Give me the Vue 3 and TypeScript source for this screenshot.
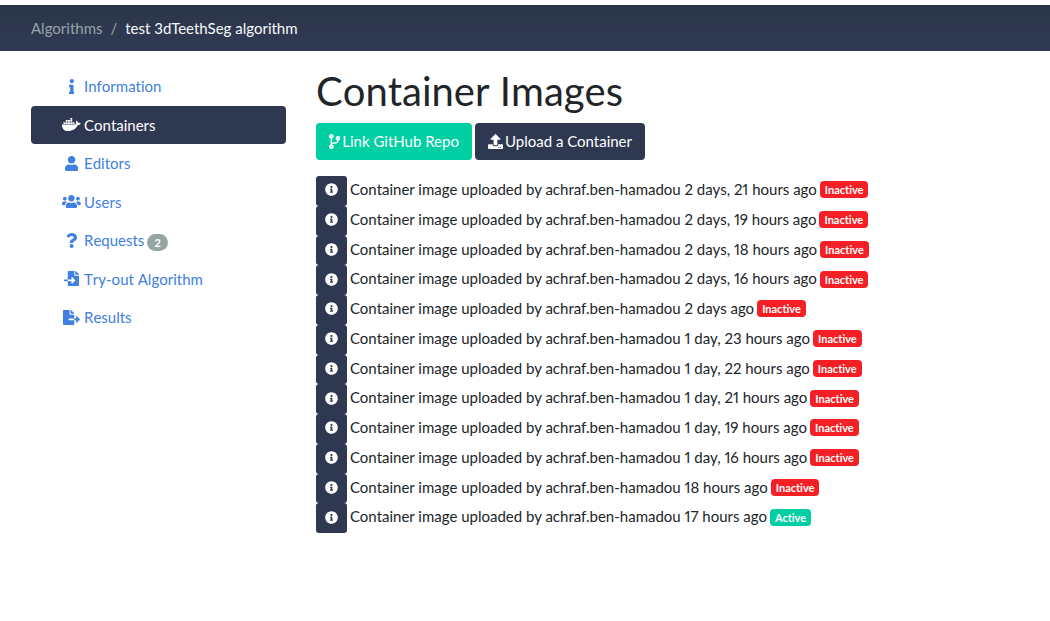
<script setup lang="ts">
interface Glyph {
  width: number
  path: string
}

interface NavItem {
  label: string
  icon: Glyph
  active?: boolean
  count?: number
}

interface ContainerImage {
  age: string
  active: boolean
}

const icons: Record<string, Glyph> = {
  info: {
    width: 192,
    path: 'M20 424.229h20V279.771H20c-11.046 0-20-8.954-20-20V212c0-11.046 8.954-20 20-20h112c11.046 0 20 8.954 20 20v212.229h20c11.046 0 20 8.954 20 20V492c0 11.046-8.954 20-20 20H20c-11.046 0-20-8.954-20-20v-47.771c0-11.046 8.954-20 20-20zM96 0C56.235 0 24 32.235 24 72s32.235 72 72 72 72-32.235 72-72S135.764 0 96 0z',
  },
  docker: {
    width: 640,
    path: 'M349.9 236.3h-66.1v-59.4h66.1v59.4zm0-204.3h-66.1v60.7h66.1V32zm78.2 144.8H362v59.4h66.1v-59.4zm-156.3-72.1h-66.1v60.1h66.1v-60.1zm78.1 0h-66.1v60.1h66.1v-60.1zm276.8 100c-14.4-9.7-47.6-13.2-73.1-8.4-3.3-24-16.7-44.9-41.1-63.7l-14-9.3-9.3 14c-18.4 27.8-23.4 73.6-3.7 103.8-8.7 4.7-25.8 11.1-48.4 10.7H2.4c-8.7 50.8 5.8 116.8 44 162.1 37.1 43.9 92.7 66.2 165.4 66.2 157.4 0 273.9-72.5 328.4-204.2 21.4.4 67.6.1 91.3-45.2 1.5-2.5 6.6-13.2 8.5-17.1l-13.3-8.9zm-511.1-27.9h-66v59.4h66.1v-59.4zm78.1 0h-66.1v59.4h66.1v-59.4zm78.1 0h-66.1v59.4h66.1v-59.4zm-78.1-72.1h-66.1v60.1h66.1v-60.1z',
  },
  user: {
    width: 448,
    path: 'M224 256c70.7 0 128-57.3 128-128S294.7 0 224 0 96 57.3 96 128s57.3 128 128 128zm89.6 32h-16.7c-22.2 10.2-46.9 16-72.9 16s-50.6-5.8-72.9-16h-16.7C60.2 288 0 348.2 0 422.4V464c0 26.5 21.5 48 48 48h352c26.5 0 48-21.5 48-48v-41.6c0-74.2-60.2-134.4-134.4-134.4z',
  },
  users: {
    width: 640,
    path: 'M96 224c35.3 0 64-28.7 64-64s-28.7-64-64-64-64 28.7-64 64 28.7 64 64 64zm448 0c35.3 0 64-28.7 64-64s-28.7-64-64-64-64 28.7-64 64 28.7 64 64 64zm32 32h-64c-17.6 0-33.5 7.1-45.1 18.6 40.3 22.1 68.9 62 75.1 109.4h66c17.7 0 32-14.3 32-32v-32c0-35.3-28.7-64-64-64zm-256 0c61.9 0 112-50.1 112-112S381.9 32 320 32 208 82.1 208 144s50.1 112 112 112zm76.8 32h-8.3c-20.8 10-43.9 16-68.5 16s-47.6-6-68.5-16h-8.3C179.6 288 128 339.6 128 403.2V432c0 26.5 21.5 48 48 48h288c26.5 0 48-21.5 48-48v-28.8c0-63.6-51.6-115.2-115.2-115.2zm-223.7-13.4C161.5 263.1 145.6 256 128 256H64c-35.3 0-64 28.7-64 64v32c0 17.7 14.3 32 32 32h65.9c6.3-47.4 34.9-87.3 75.2-109.4z',
  },
  question: {
    width: 384,
    path: 'M202.021 0C122.202 0 70.503 32.703 29.914 91.026c-7.363 10.58-5.093 25.086 5.178 32.874l43.138 32.709c10.373 7.865 25.132 6.026 33.253-4.148 25.049-31.381 43.63-49.449 82.757-49.449 30.764 0 68.816 19.799 68.816 49.631 0 22.552-18.617 34.134-48.993 51.164-35.423 19.86-82.299 44.576-82.299 106.405V320c0 13.255 10.745 24 24 24h72.471c13.255 0 24-10.745 24-24v-5.773c0-42.86 125.268-44.645 125.268-160.627C377.504 66.256 286.902 0 202.021 0zM192 373.459c-38.196 0-69.271 31.075-69.271 69.271 0 38.195 31.075 69.27 69.271 69.27s69.271-31.075 69.271-69.271-31.075-69.27-69.271-69.27z',
  },
  fileImport: {
    width: 512,
    path: 'M16 288c-8.8 0-16 7.2-16 16v32c0 8.8 7.2 16 16 16h112v-64zm489-183L407.1 7c-4.5-4.5-10.6-7-17-7H384v128h128v-6.1c0-6.3-2.5-12.4-7-16.9zm-153 31V0H152c-13.3 0-24 10.7-24 24v264h128v-65.2c0-14.3 17.3-21.4 27.4-11.3L379 308c6.6 6.7 6.6 17.4 0 24l-95.7 96.4c-10.1 10.1-27.4 3-27.4-11.3V352H128v136c0 13.3 10.7 24 24 24h336c13.3 0 24-10.7 24-24V160H376c-13.2 0-24-10.8-24-24z',
  },
  fileExport: {
    width: 576,
    path: 'M384 121.9c0-6.3-2.5-12.4-7-16.9L279.1 7c-4.5-4.5-10.6-7-17-7H256v128h128zM571 308l-95.7-96.4c-10.1-10.1-27.4-3-27.4 11.3V288h-64v64h64v65.2c0 14.3 17.3 21.4 27.4 11.3L571 332c6.6-6.6 6.6-17.4 0-24zm-379 28v-32c0-8.8 7.2-16 16-16h176V160H248c-13.2 0-24-10.8-24-24V0H24C10.7 0 0 10.7 0 24v464c0 13.3 10.7 24 24 24h336c13.3 0 24-10.7 24-24V352H208c-8.8 0-16-7.2-16-16z',
  },
  branch: {
    width: 384,
    path: 'M384 144c0-44.2-35.8-80-80-80s-80 35.8-80 80c0 36.4 24.3 67.1 57.5 76.8-.6 16.1-4.2 28.5-11 36.9-15.4 19.2-49.3 22.4-85.2 25.7-28.2 2.6-57.4 5.4-81.3 16.9v-144c32.5-10.2 56-40.5 56-76.3 0-44.2-35.8-80-80-80S0 35.8 0 80c0 35.8 23.5 66.1 56 76.3v199.3C23.5 365.9 0 396.2 0 432c0 44.2 35.8 80 80 80s80-35.8 80-80c0-34-21.2-63.1-51.2-74.6 3.1-5.2 7.8-9.8 14.9-13.4 16.2-8.2 40.4-10.4 66.1-12.8 42.2-3.9 90-8.4 118.2-43.4 14-17.4 21.1-39.8 21.6-67.9 31.6-10.8 54.4-40.7 54.4-75.9zM80 64c8.8 0 16 7.2 16 16s-7.2 16-16 16-16-7.2-16-16 7.2-16 16-16zm0 384c-8.8 0-16-7.2-16-16s7.2-16 16-16 16 7.2 16 16-7.2 16-16 16zm224-320c8.8 0 16 7.2 16 16s-7.2 16-16 16-16-7.2-16-16 7.2-16 16-16z',
  },
  upload: {
    width: 512,
    path: 'M296 384h-80c-13.3 0-24-10.7-24-24V192h-87.7c-17.8 0-26.7-21.5-14.1-34.1L242.3 5.7c7.5-7.5 19.8-7.5 27.3 0l152.2 152.2c12.6 12.6 3.7 34.1-14.1 34.1H320v168c0 13.3-10.7 24-24 24zm216-8v112c0 13.3-10.7 24-24 24H24c-13.3 0-24-10.7-24-24V376c0-13.3 10.7-24 24-24h136v8c0 30.9 25.1 56 56 56h80c30.9 0 56-25.1 56-56v-8h136c13.3 0 24 10.7 24 24zm-124 88c0-11-9-20-20-20s-20 9-20 20 9 20 20 20 20-9 20-20zm64 0c0-11-9-20-20-20s-20 9-20 20 9 20 20 20 20-9 20-20z',
  },
  infoCircle: {
    width: 512,
    path: 'M256 8C119.043 8 8 119.083 8 256c0 136.997 111.043 248 248 248s248-111.003 248-248C504 119.083 392.957 8 256 8zm0 110c23.196 0 42 18.804 42 42s-18.804 42-42 42-42-18.804-42-42 18.804-42 42-42zm56 254c0 6.627-5.373 12-12 12h-88c-6.627 0-12-5.373-12-12v-24c0-6.627 5.373-12 12-12h12v-64h-12c-6.627 0-12-5.373-12-12v-24c0-6.627 5.373-12 12-12h64c6.627 0 12 5.373 12 12v100h12c6.627 0 12 5.373 12 12v24z',
  },
}

const navItems: NavItem[] = [
  { label: 'Information', icon: icons.info },
  { label: 'Containers', icon: icons.docker, active: true },
  { label: 'Editors', icon: icons.user },
  { label: 'Users', icon: icons.users },
  { label: 'Requests', icon: icons.question, count: 2 },
  { label: 'Try-out Algorithm', icon: icons.fileImport },
  { label: 'Results', icon: icons.fileExport },
]

const uploader = 'achraf.ben-hamadou'

const images: ContainerImage[] = [
  { age: '2 days, 21 hours', active: false },
  { age: '2 days, 19 hours', active: false },
  { age: '2 days, 18 hours', active: false },
  { age: '2 days, 16 hours', active: false },
  { age: '2 days', active: false },
  { age: '1 day, 23 hours', active: false },
  { age: '1 day, 22 hours', active: false },
  { age: '1 day, 21 hours', active: false },
  { age: '1 day, 19 hours', active: false },
  { age: '1 day, 16 hours', active: false },
  { age: '18 hours', active: false },
  { age: '17 hours', active: true },
]
</script>

<template>
  <div class="page">
    <nav class="breadcrumb-bar" aria-label="Breadcrumb">
      <ol class="breadcrumb">
        <li><a href="#">Algorithms</a></li>
        <li class="separator" aria-hidden="true">/</li>
        <li aria-current="page">test 3dTeethSeg algorithm</li>
      </ol>
    </nav>

    <div class="layout">
      <nav class="sidebar" aria-label="Algorithm sections">
        <a
          v-for="item in navItems"
          :key="item.label"
          href="#"
          class="nav-link"
          :class="{ active: item.active }"
        >
          <span class="nav-icon">
            <svg class="glyph" :viewBox="`0 0 ${item.icon.width} 512`" aria-hidden="true">
              <path :d="item.icon.path" />
            </svg>
          </span>
          <span>{{ item.label }}</span>
          <span v-if="item.count" class="count">{{ item.count }}</span>
        </a>
      </nav>

      <main class="content">
        <h1>Container Images</h1>

        <div class="actions">
          <button type="button" class="btn btn-success">
            <svg class="glyph" :viewBox="`0 0 ${icons.branch.width} 512`" aria-hidden="true">
              <path :d="icons.branch.path" />
            </svg>
            <span>Link GitHub Repo</span>
          </button>
          <button type="button" class="btn btn-primary">
            <svg class="glyph" :viewBox="`0 0 ${icons.upload.width} 512`" aria-hidden="true">
              <path :d="icons.upload.path" />
            </svg>
            <span>Upload a Container</span>
          </button>
        </div>

        <ul class="images">
          <li v-for="image in images" :key="image.age" class="image-row">
            <button type="button" class="info-btn" aria-label="Container image details">
              <svg class="glyph" viewBox="0 0 512 512" aria-hidden="true">
                <path :d="icons.infoCircle.path" />
              </svg>
            </button>
            <span class="summary">Container image uploaded by {{ uploader }} {{ image.age }} ago</span>
            <span class="badge" :class="image.active ? 'badge-active' : 'badge-inactive'">
              {{ image.active ? 'Active' : 'Inactive' }}
            </span>
          </li>
        </ul>
      </main>
    </div>
  </div>
</template>

<style>
body {
  margin: 0;
  background: #fff;
}
</style>

<style scoped>
.page {
  padding-top: 5px;
  color: #212529;
  font-family: Lato, "Liberation Sans", sans-serif;
  font-size: 15px;
  font-variant-ligatures: none;
  font-variant-numeric: proportional-nums;
  line-height: 1.5;
}

.breadcrumb-bar {
  padding: 12px 31px;
  background: linear-gradient(#293548, #2f3851 60%);
}

.breadcrumb {
  display: flex;
  gap: 8px;
  margin: 0;
  padding: 0;
  list-style: none;
  line-height: 22px;
  color: #f8f9fa;
}

.breadcrumb a,
.separator {
  color: #95a5a6;
  text-decoration: none;
}

.layout {
  display: grid;
  grid-template-columns: 255px minmax(0, 1fr);
  column-gap: 30px;
  padding: 16px 31px;
}

.sidebar {
  display: flex;
  flex-direction: column;
  font-kerning: none;
}

.nav-link {
  display: flex;
  align-items: center;
  gap: 3px;
  padding: 8px 31px;
  border-radius: 4px;
  color: #4080e0;
  text-decoration: none;
}

.nav-link.active {
  background: #2f3851;
  color: #fff;
}

.nav-icon {
  display: flex;
  justify-content: center;
  width: 19px;
}

.glyph {
  display: block;
  flex: none;
  height: 15px;
  fill: currentColor;
}

.count {
  margin-top: 4px;
  padding: 3px 7px;
  border-radius: 10px;
  background: #95a5a6;
  color: #fff;
  font-size: 11px;
  font-weight: 700;
  line-height: 11px;
}

h1 {
  margin: 0 0 8px;
  font-size: 40px;
  font-weight: 400;
  font-kerning: none;
  line-height: 48px;
}

.actions {
  display: flex;
  flex-wrap: wrap;
  gap: 3px;
  margin-bottom: 16px;
}

.btn,
.info-btn {
  display: flex;
  align-items: center;
  border: 0;
  border-radius: 4px;
  color: #fff;
  font: inherit;
  font-variant-ligatures: none;
  cursor: pointer;
}

.btn {
  gap: 2px;
  padding: 7px 13px;
  line-height: 23px;
}

.btn-success {
  background: #00cea3;
}

.btn-primary,
.info-btn {
  background: #2f3851;
}

.images {
  display: grid;
  grid-auto-rows: 1fr;
  min-height: 357px;
  margin: 0;
  padding: 0;
  list-style: none;
}

.image-row {
  display: flex;
  align-items: center;
  gap: 3px;
}

.summary {
  padding-bottom: 3px;
}

.info-btn {
  align-self: stretch;
  padding: 0 9px 2px;
  border-radius: 3px;
}

.info-btn .glyph {
  width: 13px;
  height: 13px;
}

.badge {
  margin-bottom: 2px;
  padding: 3px 5px;
  border-radius: 4px;
  color: #fff;
  font-size: 11px;
  font-weight: 700;
  line-height: 11px;
}

.badge-inactive {
  background: #f52025;
}

.badge-active {
  background: #00cea3;
}
</style>
